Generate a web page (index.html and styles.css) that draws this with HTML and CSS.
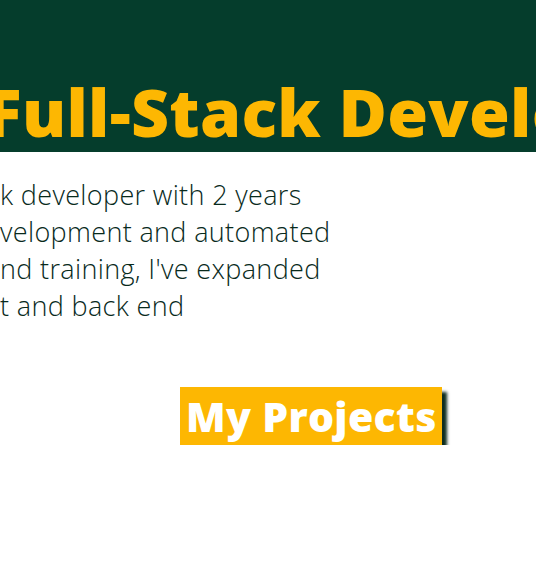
FILE: index.html
```html
<!DOCTYPE html>
<html lang="en">
<head>
<meta charset="utf-8">
<title>Full-Stack Developer</title>
<link rel="stylesheet" href="styles.css">
</head>
<body>
<header class="hero">
  <h1 class="hero-title">Full-Stack Developer</h1>
</header>
<main class="about">
  <p class="intro">
    <span class="line"><span class="cut">I'm a full-stac</span>k developer with 2 years</span>
    <span class="line"><span class="cut">of experience in web de</span>velopment and automated</span>
    <span class="line"><span class="cut">testing. Through self-study a</span>nd training, I've expanded</span>
    <span class="line"><span class="cut">my skills in both fron</span>t and back end</span>
  </p>
  <div class="actions">
    <a class="btn" href="#projects">My Projects</a>
  </div>
</main>
</body>
</html>
```
FILE: styles.css
```css
html, body {
  margin: 0;
  padding: 0;
  background: #ffffff;
  overflow: hidden;
}
body {
  width: 536px;
  height: 563px;
  font-family: "Open Sans", Lato, sans-serif;
}
.hero {
  background: #053d2c;
  height: 152px;
  display: flex;
  align-items: flex-end;
  overflow: hidden;
}
.hero-title {
  margin: 0 0 0 -14px;
  padding-bottom: 8px;
  font-size: 66px;
  line-height: 1;
  font-weight: 800;
  letter-spacing: 0.3px;
  color: #fdb702;
  white-space: nowrap;
}
.about {
  overflow: hidden;
}
.intro {
  margin: 24px 0 0 0;
  font-size: 27px;
  line-height: 37px;
  font-weight: 300;
  letter-spacing: 0.35px;
  color: #082a1c;
}
.line {
  display: block;
  white-space: nowrap;
}
.cut {
  display: inline-block;
  width: 0;
  direction: rtl;
  white-space: nowrap;
}
.actions {
  padding: 63px 0 0 180px;
}
.btn {
  display: inline-block;
  background: #fdb702;
  color: #ffffff;
  text-decoration: none;
  font-size: 41px;
  font-weight: 800;
  line-height: 58px;
  letter-spacing: 0.3px;
  padding: 0 5px 0 6px;
  box-shadow: 5px 5px 3px #0d2d1f;
}
```
